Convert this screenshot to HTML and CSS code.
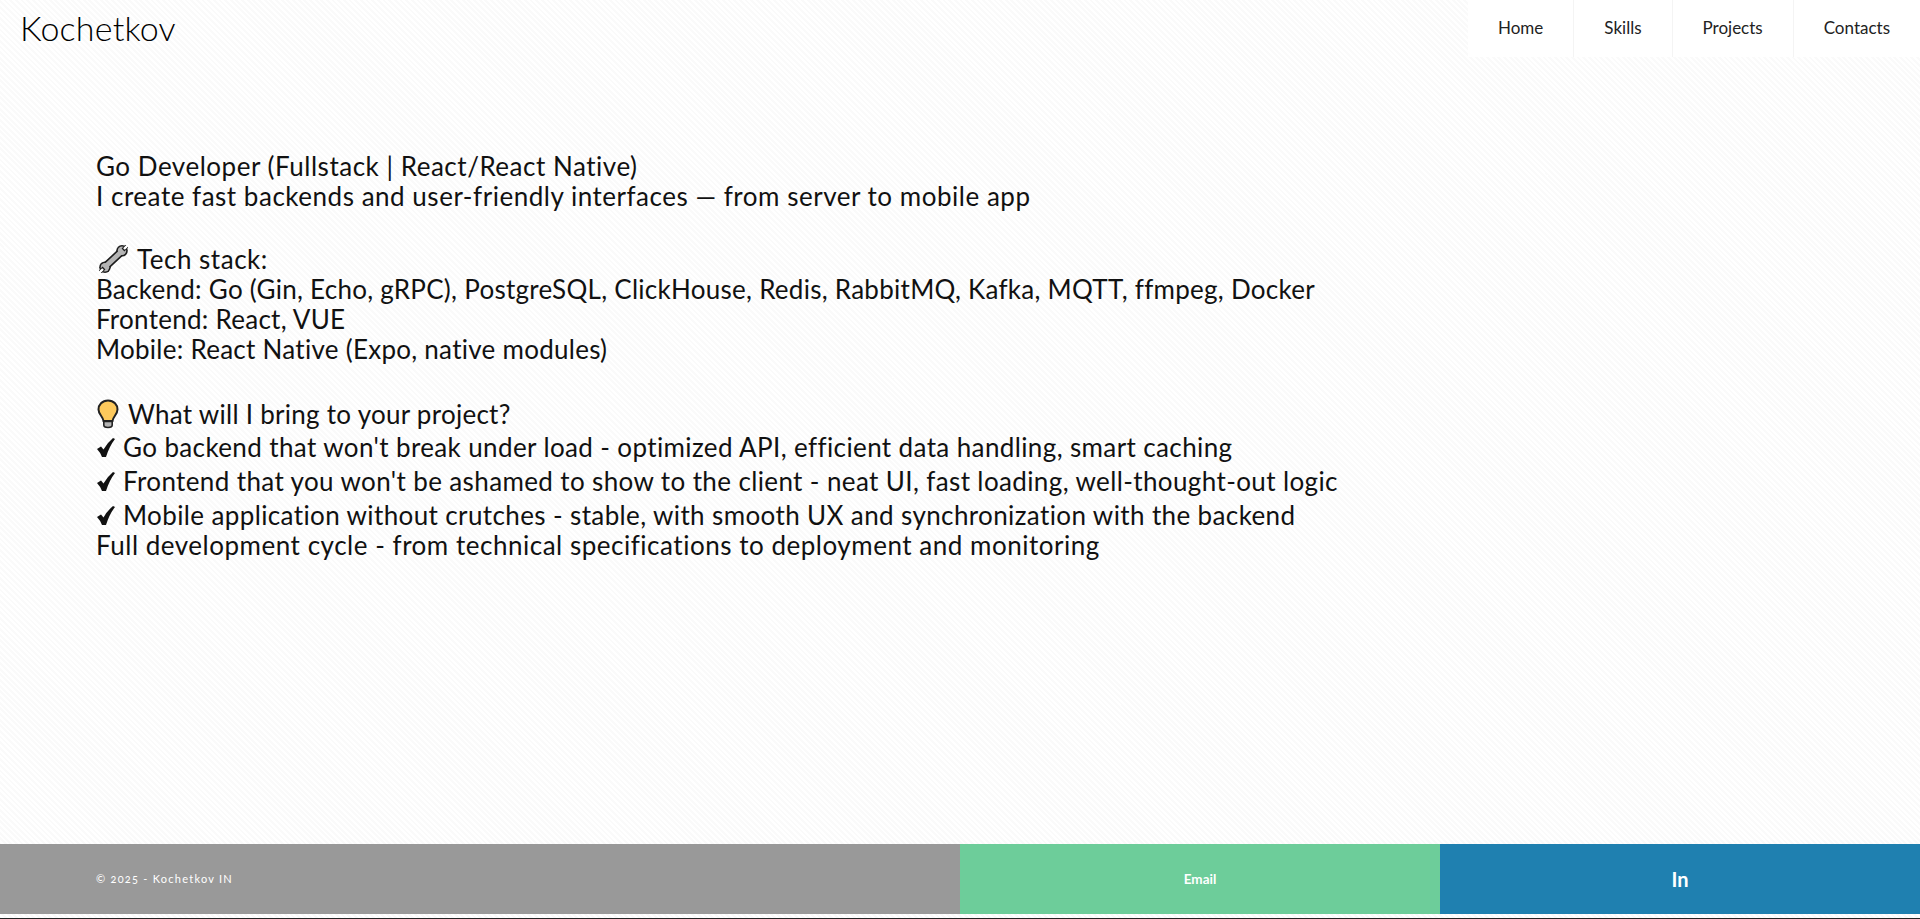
FILE: index.html
```html
<!DOCTYPE html>
<html lang="en">
<head>
    <meta charset="UTF-8">
    <meta name="viewport" content="width=device-width, initial-scale=1.0">
    <title>Kochetkov</title>
    <link rel="stylesheet" href="styles.css">
</head>
<body>

    <header class="header">
        <a class="logo" href="#">Kochetkov</a>
        <nav class="nav">
            <a href="#">Home</a>
            <a href="#">Skills</a>
            <a href="#">Projects</a>
            <a href="#">Contacts</a>
        </nav>
    </header>

    <main class="about">
        <p class="line">Go Developer (Fullstack | React/React Native)</p>
        <p class="line">I create fast backends and user-friendly interfaces — from server to mobile app</p>

        <p class="line icon-line gap">
            <svg class="emoji wrench" viewBox="0 0 29 28" width="29" height="28">
                <path d="M7 21 L22 7" stroke="#1c1c1c" stroke-width="8" stroke-linecap="round"/>
                <circle cx="23" cy="5.8" r="5.8" fill="#1c1c1c"/>
                <circle cx="6" cy="22.2" r="5.8" fill="#1c1c1c"/>
                <path d="M7 21 L22 7" stroke="#b4b4b4" stroke-width="4.8" stroke-linecap="round"/>
                <circle cx="23" cy="5.8" r="4.2" fill="#b4b4b4"/>
                <circle cx="6" cy="22.2" r="4.2" fill="#b4b4b4"/>
                <path d="M24 5 L29 0 M5 23 L0 28" stroke="#1c1c1c" stroke-width="4"/>
                <path d="M25 4 L29 0 M4 24 L0 28" stroke="#fff" stroke-width="2.4"/>
            </svg>
            <span>Tech stack:</span>
        </p>
        <p class="line tight">Backend: Go (Gin, Echo, gRPC), PostgreSQL, ClickHouse, Redis, RabbitMQ, Kafka, MQTT, ffmpeg, Docker</p>
        <p class="line tight">Frontend: React, VUE</p>
        <p class="line tight">Mobile: React Native (Expo, native modules)</p>

        <p class="line icon-line gap-wide">
            <svg class="emoji bulb" viewBox="0 0 22 30" width="22" height="30">
                <path d="M11 1.5 C5 1.5 1.5 6 1.5 10.5 C1.5 15.5 6 17.5 6.5 22 H15.5 C16 17.5 20.5 15.5 20.5 10.5 C20.5 6 17 1.5 11 1.5 Z" fill="#fdc95c" stroke="#222" stroke-width="2"/>
                <path d="M6.8 22.5 H15.2 V26 Q15.2 28.5 11 28.5 Q6.8 28.5 6.8 26 Z" fill="#b5b5b5" stroke="#222" stroke-width="1.6"/>
            </svg>
            <span class="tight">What will I bring to your project?</span>
        </p>
        <p class="line check first-check">
            <svg class="tick" viewBox="0 0 18 19" width="18" height="19"><path d="M0 11 L4 8.5 L6.5 11.5 Q10 5 16 0 L18 1 Q12.5 8 9 19 L5 19 Q3 14 0 11 Z"/></svg>
            <span>Go backend that won't break under load - optimized API, efficient data handling, smart caching</span>
        </p>
        <p class="line check">
            <svg class="tick" viewBox="0 0 18 19" width="18" height="19"><path d="M0 11 L4 8.5 L6.5 11.5 Q10 5 16 0 L18 1 Q12.5 8 9 19 L5 19 Q3 14 0 11 Z"/></svg>
            <span>Frontend that you won't be ashamed to show to the client - neat UI, fast loading, well-thought-out logic</span>
        </p>
        <p class="line check">
            <svg class="tick" viewBox="0 0 18 19" width="18" height="19"><path d="M0 11 L4 8.5 L6.5 11.5 Q10 5 16 0 L18 1 Q12.5 8 9 19 L5 19 Q3 14 0 11 Z"/></svg>
            <span>Mobile application without crutches - stable, with smooth UX and synchronization with the backend</span>
        </p>
        <p class="line">Full development cycle - from technical specifications to deployment and monitoring</p>
    </main>

    <footer class="footer">
        <div class="copy">© 2025 - Kochetkov IN</div>
        <a class="email" href="#">Email</a>
        <a class="linkedin" href="#">In</a>
    </footer>
    <div class="bottom-edge"></div>

</body>
</html>
```

FILE: styles.css
```css
body {
    margin: 0;
    height: 919px;
    overflow: hidden;
    display: flex;
    flex-direction: column;
    font-family: Lato, "Open Sans", sans-serif;
    color: #111;
    background-color: #fff;
    background-image: repeating-linear-gradient(45deg, #fafafa 0, #fafafa 2px, #fff 2px, #fff 4px);
}

a {
    color: inherit;
    text-decoration: none;
}

.header {
    height: 58px;
    display: flex;
    justify-content: space-between;
    padding-left: 20px;
}

.logo {
    font-size: 34px;
    font-weight: 300;
    line-height: 56px;
    letter-spacing: 0.2px;
    color: #000;
}

.nav {
    display: flex;
    height: 57px;
}

.nav a {
    padding: 0 30px;
    line-height: 56px;
    font-size: 17px;
    color: #222;
    background: #fff;
    border-left: 1px solid #f4f4f4;
}

.nav a:first-child {
    border-left: 0;
}

.about {
    flex: 1;
    padding: 93px 96px 0;
    font-size: 26px;
    letter-spacing: 0.52px;
}

.line {
    margin: 0;
    line-height: 30px;
}

.tight {
    letter-spacing: 0.27px;
}

.gap {
    margin-top: 33px;
}

.gap-wide {
    margin-top: 35px;
}

.icon-line {
    display: flex;
    align-items: center;
    gap: 9px;
}

.emoji {
    flex: none;
}

.wrench {
    margin-left: 3px;
}

.bulb {
    margin-left: 1px;
}

.check {
    margin-top: 4px;
    display: flex;
    align-items: center;
    gap: 8px;
    letter-spacing: 0.38px;
}

.first-check {
    margin-top: 3px;
}

.tick {
    flex: none;
    margin-left: 1px;
    fill: #111;
}

.footer {
    height: 70px;
    display: grid;
    grid-template-columns: 960px 480px 480px;
    color: #fff;
}

.copy {
    background: #999;
    padding-left: 96px;
    line-height: 70px;
    font-size: 11px;
    letter-spacing: 1.25px;
    font-variant-numeric: oldstyle-nums;
}

.email {
    background: #6dcd9a;
    text-align: center;
    line-height: 70px;
    font-size: 13.5px;
    font-weight: 700;
}

.linkedin {
    background: #1f80b0;
    text-align: center;
    line-height: 70px;
    font-size: 20px;
    font-weight: 700;
}

.bottom-edge {
    height: 1px;
    margin-top: 4px;
    background: #222;
}
```
